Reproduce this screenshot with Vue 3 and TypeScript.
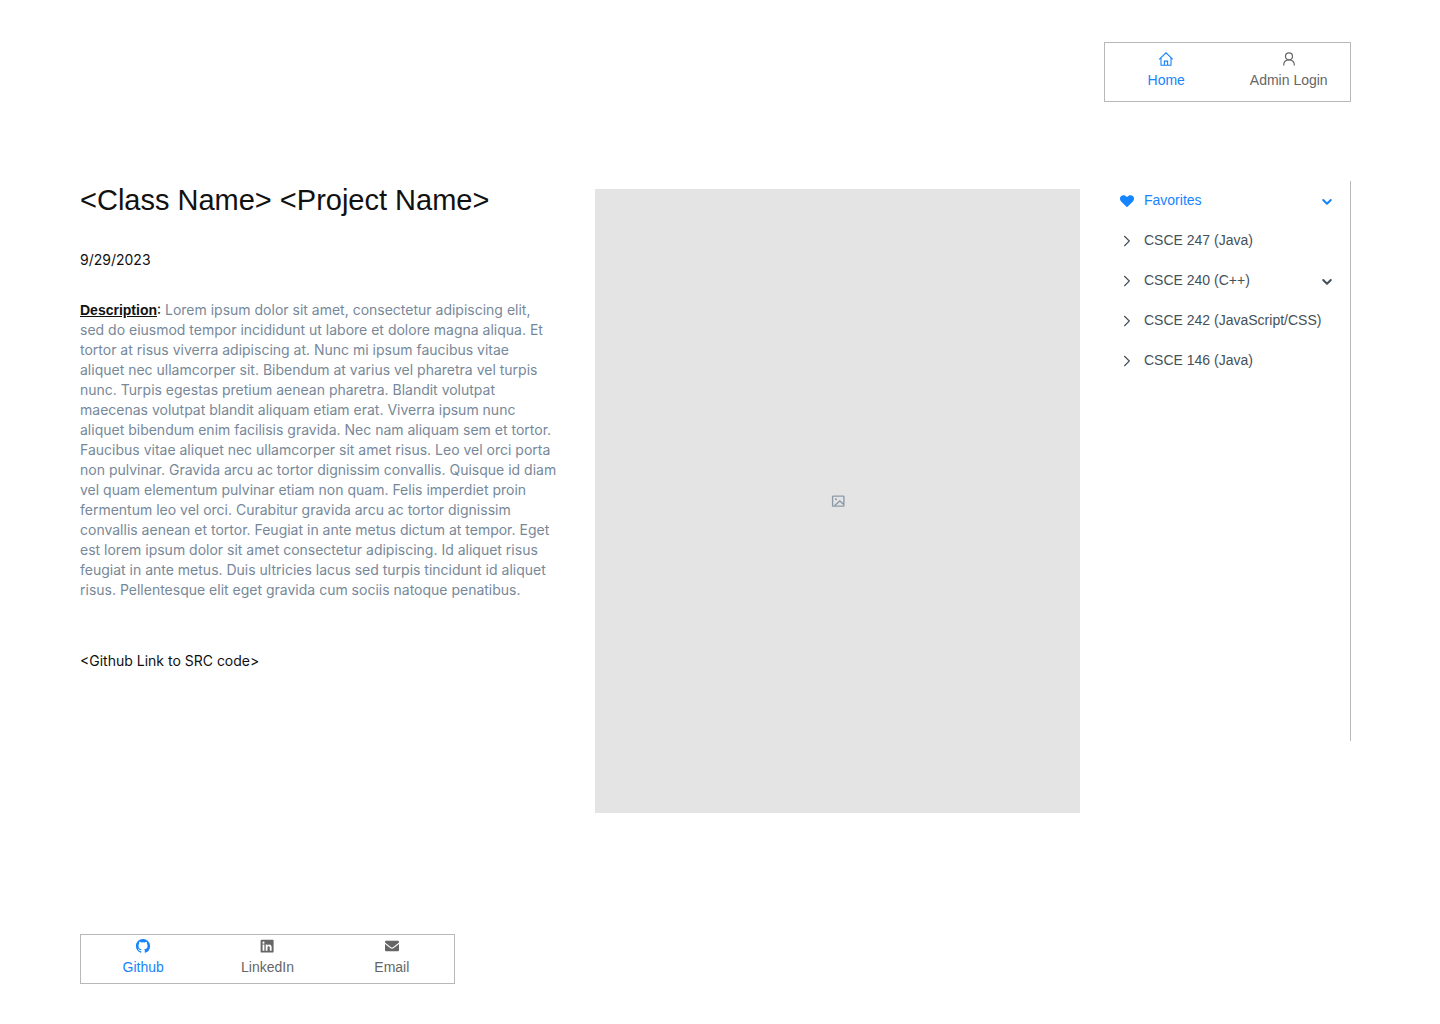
<script setup lang="ts">
interface Course {
  label: string
  expandable: boolean
}

const courses: Course[] = [
  { label: 'CSCE 247 (Java)', expandable: false },
  { label: 'CSCE 240 (C++)', expandable: true },
  { label: 'CSCE 242 (JavaScript/CSS)', expandable: false },
  { label: 'CSCE 146 (Java)', expandable: false },
]

const descriptionLines: string[] = [
  'Lorem ipsum dolor sit amet, consectetur adipiscing elit,',
  'sed do eiusmod tempor incididunt ut labore et dolore magna aliqua. Et',
  'tortor at risus viverra adipiscing at. Nunc mi ipsum faucibus vitae',
  'aliquet nec ullamcorper sit. Bibendum at varius vel pharetra vel turpis',
  'nunc. Turpis egestas pretium aenean pharetra. Blandit volutpat',
  'maecenas volutpat blandit aliquam etiam erat. Viverra ipsum nunc',
  'aliquet bibendum enim facilisis gravida. Nec nam aliquam sem et tortor.',
  'Faucibus vitae aliquet nec ullamcorper sit amet risus. Leo vel orci porta',
  'non pulvinar. Gravida arcu ac tortor dignissim convallis. Quisque id diam',
  'vel quam elementum pulvinar etiam non quam. Felis imperdiet proin',
  'fermentum leo vel orci. Curabitur gravida arcu ac tortor dignissim',
  'convallis aenean et tortor. Feugiat in ante metus dictum at tempor. Eget',
  'est lorem ipsum dolor sit amet consectetur adipiscing. Id aliquet risus',
  'feugiat in ante metus. Duis ultricies lacus sed turpis tincidunt id aliquet',
  'risus. Pellentesque elit eget gravida cum sociis natoque penatibus.',
]
const description = descriptionLines.join('\n')
</script>

<template>
  <div class="page">
    <header class="top">
      <nav class="tabs main-tabs" aria-label="Main">
        <a class="tab active" href="#home">
          <svg class="icon" viewBox="0 0 16 16" fill="none" stroke="currentColor" stroke-width="1.1">
            <path d="M1.2 8.400 8 1.800l6.800 6.600M3 7v7.300h10V7M6.400 14.300v-4.200h3.200v4.200" />
          </svg>
          <span>Home</span>
        </a>
        <a class="tab" href="#login">
          <svg class="icon" viewBox="0 0 16 16" fill="none" stroke="currentColor" stroke-width="1.2">
            <circle cx="8" cy="5.300" r="3.500" />
            <path d="M2.600 14.400c.1-3.300 2.300-5.600 5.400-5.600s5.300 2.300 5.400 5.600" />
          </svg>
          <span>Admin Login</span>
        </a>
      </nav>
    </header>

    <main class="content">
      <article class="project">
        <h1>&lt;Class Name&gt; &lt;Project Name&gt;</h1>
        <time class="date" datetime="2023-09-29">9/29/2023</time>
        <p class="description"><b>Description</b><span class="colon">:</span> {{ description }}</p>
        <a class="source" href="#source">&lt;Github Link to SRC code&gt;</a>
      </article>

      <div class="preview" role="img" aria-label="Project image">
        <svg class="icon" viewBox="0 0 16 16" fill="none" stroke="currentColor" stroke-width="1.400">
          <rect x="2.600" y="3.100" width="11.300" height="10" rx="0.600" />
          <path d="M4.500 12.800 9.800 8l3.900 3.400" />
          <circle cx="6" cy="6.200" r="1" fill="currentColor" stroke="none" />
        </svg>
      </div>

      <aside class="sidebar">
        <button class="row active" type="button">
          <svg class="icon" viewBox="0 0 16 16" fill="currentColor">
            <path d="M8 14.300 2.100 8.500C.5 6.900.6 4.400 2.100 3.100c1.600-1.400 3.900-1 5.200.3l.7.700.7-.7c1.300-1.300 3.600-1.700 5.200-.3 1.500 1.300 1.600 3.800 0 5.400z" />
          </svg>
          <span class="label">Favorites</span>
          <svg class="icon" viewBox="0 0 16 16" fill="none" stroke="currentColor" stroke-width="2" stroke-linecap="round" stroke-linejoin="round">
            <path d="m4.200 7 3.800 3.800L11.800 7" />
          </svg>
        </button>
        <button v-for="course in courses" :key="course.label" class="row" type="button">
          <svg class="icon" viewBox="0 0 16 16" fill="none" stroke="currentColor" stroke-width="1.200">
            <path d="m5.300 3 5 5-5 5" />
          </svg>
          <span class="label">{{ course.label }}</span>
          <svg v-if="course.expandable" class="icon" viewBox="0 0 16 16" fill="none" stroke="currentColor" stroke-width="2" stroke-linecap="round" stroke-linejoin="round">
            <path d="m4.200 7 3.800 3.800L11.800 7" />
          </svg>
        </button>
      </aside>
    </main>

    <footer>
      <nav class="tabs contact-tabs" aria-label="Contact">
        <a class="tab active" href="#github">
          <svg class="icon" viewBox="-1 -1 18 18" fill="currentColor">
            <path d="M8 0C3.580 0 0 3.580 0 8c0 3.540 2.290 6.530 5.470 7.590.4.070.55-.17.55-.38 0-.19-.01-.82-.01-1.490-2.010.37-2.530-.49-2.690-.94-.09-.23-.48-.94-.82-1.130-.28-.15-.68-.52-.01-.53.63-.01 1.080.58 1.230.82.72 1.210 1.870.87 2.330.66.07-.52.28-.87.51-1.070-1.780-.2-3.640-.89-3.640-3.950 0-.87.31-1.590.82-2.150-.08-.2-.36-1.020.08-2.120 0 0 .67-.21 2.200.82a7.600 7.600 0 0 1 4 0c1.530-1.040 2.200-.82 2.200-.82.44 1.100.16 1.920.08 2.120.51.56.82 1.270.82 2.150 0 3.070-1.870 3.750-3.650 3.950.29.25.54.73.54 1.480 0 1.070-.01 1.930-.01 2.200 0 .21.15.46.55.38A8.010 8.010 0 0 0 16 8c0-4.420-3.580-8-8-8z" />
          </svg>
          <span>Github</span>
        </a>
        <a class="tab" href="#linkedin">
          <svg class="icon" viewBox="0 0 16 16" fill="currentColor">
            <path fill-rule="evenodd" d="M2.500 1.700h11.200c.5 0 .9.400.9.900v11.100c0 .5-.4.900-.9.900H2.500c-.5 0-.9-.4-.9-.9V2.600c0-.5.4-.9.9-.9zM3.600 6.600v6.100h1.800V6.600zM4.500 3.600a1.100 1.100 0 1 0 0 2.200 1.100 1.100 0 0 0 0-2.200zM6.700 6.600v6.100h1.800V9.600c0-1.900 2.300-1.900 2.300 0v3.100h1.800V9.100c0-3.200-3.100-3.300-4.100-1.700v-.8z" />
          </svg>
          <span>LinkedIn</span>
        </a>
        <a class="tab" href="#email">
          <svg class="icon" viewBox="0 0 16 16" fill="currentColor">
            <path d="M2.300 2.800h11.400c.8 0 1.300.5 1.300 1.200v.6L9 9.200c-.6.5-1.400.5-2 0L1 4.600V4c0-.7.5-1.200 1.300-1.200z" />
            <path d="M1 6v6c0 .8.500 1.300 1.300 1.300h11.400c.8 0 1.300-.5 1.300-1.300V6l-5.200 4c-1.100.9-2.500.9-3.600 0z" />
          </svg>
          <span>Email</span>
        </a>
      </nav>
    </footer>
  </div>
</template>

<style>
body {
  margin: 0;
  background: #fff;
}
</style>

<style scoped>
.page {
  box-sizing: border-box;
  min-height: 100vh;
  display: flex;
  flex-direction: column;
  padding: 42px 89px 40px 80px;
  color: #111;
  font: 14px/20px "Liberation Sans", Arial, sans-serif;
}

.icon {
  display: block;
  flex: none;
  width: 16px;
  height: 16px;
}

.top {
  display: flex;
  justify-content: flex-end;
}

.tabs {
  box-sizing: border-box;
  display: flex;
  border: 1px solid #b8b8b8;
}

.main-tabs {
  width: 247px;
  height: 60px;
  padding-top: 8px;
}

.contact-tabs {
  width: 375px;
  height: 50px;
  padding-top: 3px;
}

.tab {
  flex: 1;
  display: flex;
  flex-direction: column;
  align-items: center;
  gap: 3px;
  color: #666;
  text-decoration: none;
  white-space: nowrap;
}

.active,
.row.active {
  color: #1684fc;
}

.content {
  display: flex;
  align-items: flex-start;
  margin-top: 79px;
}

.project {
  flex: 1;
  min-width: 0;
  display: flex;
  flex-direction: column;
  align-items: flex-start;
  font-family: Inter, sans-serif;
}

h1 {
  margin: 0;
  font-family: "Liberation Sans", Arial, sans-serif;
  font-size: 29px;
  font-weight: 400;
  line-height: 38px;
  white-space: nowrap;
}

.date {
  margin-top: 31px;
}

.description {
  margin: 30px 0 0;
  color: #778899;
  white-space: pre-line;
}

.description b {
  color: #111;
  font-family: "Liberation Sans", Arial, sans-serif;
  font-weight: 700;
  text-decoration: underline;
}

.colon {
  color: #111;
}

.source {
  margin-top: 51px;
  color: #111;
  text-decoration: none;
}

.preview {
  flex: 0 0 485px;
  height: 624px;
  margin-top: 8px;
  display: flex;
  align-items: center;
  justify-content: center;
  background: #e4e4e4;
  color: #8c9ba8;
}

.sidebar {
  box-sizing: border-box;
  flex: 0 0 247px;
  height: 560px;
  margin-left: 24px;
  border-right: 1px solid #b8b8b8;
}

.row {
  box-sizing: border-box;
  width: 100%;
  height: 40px;
  display: flex;
  align-items: center;
  gap: 9px;
  padding: 0 15px;
  border: 0;
  background: none;
  color: #455058;
  font: inherit;
  text-align: left;
}

.label {
  flex: 1;
  padding-bottom: 2px;
  white-space: nowrap;
}

footer {
  margin-top: auto;
}
</style>
